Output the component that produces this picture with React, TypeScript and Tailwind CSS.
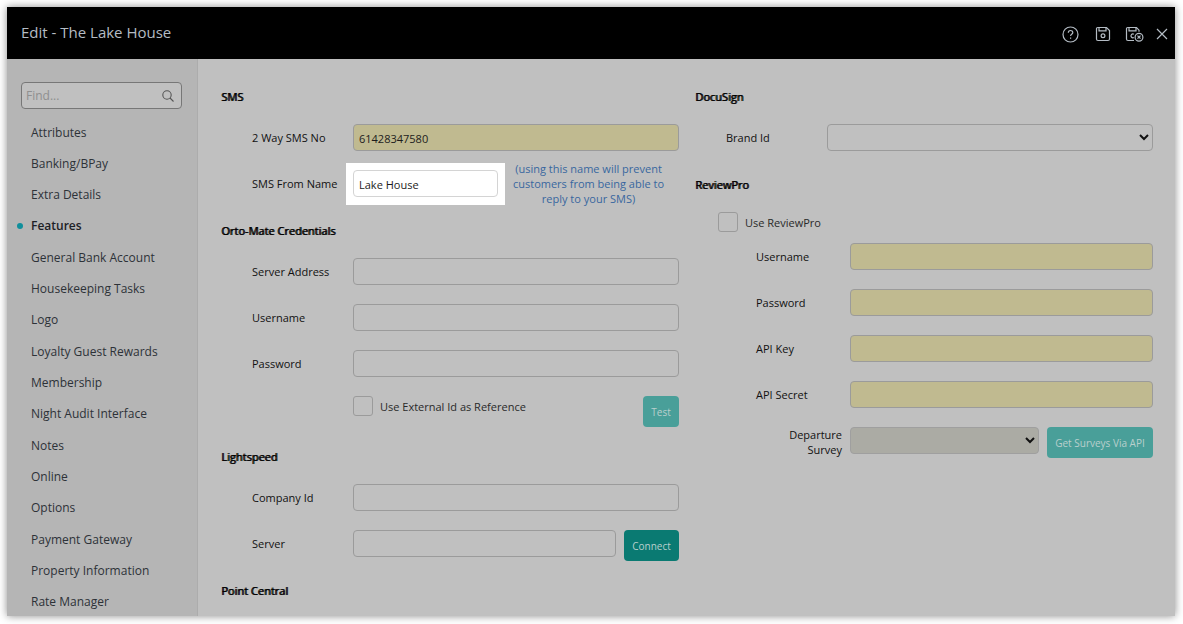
import type { ReactNode } from "react";

const menuItems = [
  "Attributes",
  "Banking/BPay",
  "Extra Details",
  "Features",
  "General Bank Account",
  "Housekeeping Tasks",
  "Logo",
  "Loyalty Guest Rewards",
  "Membership",
  "Night Audit Interface",
  "Notes",
  "Online",
  "Options",
  "Payment Gateway",
  "Property Information",
  "Rate Manager",
];

const inputClass = "h-[27px] w-full min-w-0 rounded border px-[5px] pt-0.5 text-[11px] text-[#1c1c1c] outline-none";
const buttonClass = "h-[31px] shrink-0 rounded pt-0.5 text-[10px]";

export default function App() {
  return (
    <div className="flex min-h-screen bg-white pt-[7px] pr-2 pb-2 pl-[7px] font-['Open_Sans','Noto_Sans',sans-serif] text-[11px] leading-[15px] text-[#111]">
      <div className="flex flex-1 flex-col bg-[#c0c0c0] shadow-[0_0_8px_rgba(0,0,0,0.45)]">
        <header className="flex h-[52px] items-center justify-between bg-black pr-[7px] pl-[14px] text-[#b4bcc4]">
          <h1 className="pb-0.5 text-[15px]">Edit - The Lake House</h1>
          <div className="flex items-center gap-4 pt-0.5">
            <button type="button" aria-label="Help"><HelpIcon /></button>
            <div className="flex items-center gap-[14px]">
              <button type="button" aria-label="Save"><SaveIcon /></button>
              <div className="flex items-center gap-3">
                <button type="button" aria-label="Save and close"><SaveExitIcon /></button>
                <button type="button" aria-label="Close"><CloseIcon /></button>
              </div>
            </div>
          </div>
        </header>

        <div className="flex flex-1">
          <Sidebar />
          <main className="grid flex-1 grid-cols-2 items-start gap-4 pt-[30px] pr-[22px] pb-4 pl-[23px]">
            <div className="flex flex-col gap-[22px]">
              <Section title="SMS">
                <Field id="sms-no" label="2 Way SMS No" value="61428347580" required />
                <div className="flex h-[31px] items-start pl-[31px]">
                  <FieldLabel id="sms-from">SMS From Name</FieldLabel>
                  <div className="-m-[7px] w-[159px] shrink-0 bg-white p-[7px] pb-2">
                    <input id="sms-from" defaultValue="Lake House" className={`${inputClass} border-[#d4d4d4] bg-white`} />
                  </div>
                  <p className="-mt-[9px] flex-1 text-center whitespace-nowrap text-[#38679f]">
                    (using this name will prevent<br />customers from being able to<br />reply to your SMS)
                  </p>
                </div>
              </Section>

              <Section title="Orto-Mate Credentials">
                <Field id="orto-server" label="Server Address" />
                <Field id="orto-user" label="Username" />
                <Field id="orto-password" label="Password" type="password" />
                <div className="flex items-start justify-between pl-[132px]">
                  <Checkbox id="external-id" label="Use External Id as Reference" />
                  <button type="button" className={`${buttonClass} w-9 bg-[#499f99] text-[#b9cfcd]`}>Test</button>
                </div>
              </Section>

              <Section title="Lightspeed">
                <Field id="company-id" label="Company Id" />
                <Field id="server" label="Server">
                  <button type="button" className={`${buttonClass} ml-2 w-[55px] bg-[#0a7a72] text-[#b9cfcd]`}>Connect</button>
                </Field>
              </Section>

              <Section title="Point Central" />
            </div>

            <div className="flex flex-col gap-[26px]">
              <Section title="DocuSign">
                <div className="flex items-start pl-[31px]">
                  <FieldLabel id="brand-id">Brand Id</FieldLabel>
                  <select id="brand-id" className="h-[27px] min-w-0 flex-1 rounded border border-[#9b9b9b] bg-[#c0c0c0]" />
                </div>
              </Section>

              <Section title="ReviewPro">
                <div className="pl-[23px]">
                  <Checkbox id="use-reviewpro" label="Use ReviewPro" />
                </div>
                <div className="-mt-2 flex flex-col gap-[19px] pl-[61px]">
                  <ReviewField id="rp-user" label="Username" />
                  <ReviewField id="rp-password" label="Password" type="password" />
                  <ReviewField id="rp-key" label="API Key" />
                  <ReviewField id="rp-secret" label="API Secret" />
                  <div className="flex items-start">
                    <label htmlFor="survey" className="w-[94px] shrink-0 pr-2 text-right">Departure<br />Survey</label>
                    <select id="survey" className="h-[27px] min-w-0 flex-1 rounded border border-[#9f9f9f] bg-[#ababa4]" />
                    <button type="button" className={`${buttonClass} ml-2 w-[106px] bg-[#499f99] text-[#b9cfcd]`}>Get Surveys Via API</button>
                  </div>
                </div>
              </Section>
            </div>
          </main>
        </div>
      </div>
    </div>
  );
}

function Sidebar() {
  return (
    <aside className="flex w-[191px] shrink-0 flex-col border-r border-[#acacac] bg-[#b5b5b5] pt-[23px] text-xs text-[#2d3238]">
      <div className="mr-[15px] ml-[14px] flex h-[27px] items-center rounded border border-[#777] bg-[#c0c0c0] pr-[7px] pl-1">
        <input aria-label="Find" placeholder="Find..." className="min-w-0 flex-1 bg-transparent outline-none placeholder:text-[#8f8f8f]" />
        <SearchIcon />
      </div>
      <nav className="mt-[9px] flex flex-1">
        <ul className="flex flex-1 flex-col justify-between">
          {menuItems.map((item) => (
            <li key={item} className="flex h-7 items-center pt-px pl-[10px]">
              <span className={`mr-2 size-1.5 rounded-full ${item === "Features" ? "bg-[#0f8f9c]" : ""}`} />
              <a href="#" className={item === "Features" ? "font-semibold text-[#1d2126]" : ""}>{item}</a>
            </li>
          ))}
        </ul>
      </nav>
    </aside>
  );
}

function Section({ title, children }: { title: string; children?: ReactNode }) {
  return (
    <section className="flex flex-col gap-[19px]">
      <h2 className="h-4 text-black [text-shadow:1px_0_0_#000]">{title}</h2>
      {children}
    </section>
  );
}

function FieldLabel({ id, children }: { id: string; children: ReactNode }) {
  return <label htmlFor={id} className="w-[101px] shrink-0 pt-1.5">{children}</label>;
}

type FieldProps = { id: string; label: string; value?: string; type?: string; required?: boolean; children?: ReactNode };

function Field({ id, label, value, type = "text", required, children }: FieldProps) {
  return (
    <div className="flex items-start pl-[31px]">
      <FieldLabel id={id}>{label}</FieldLabel>
      <input id={id} type={type} defaultValue={value} className={`${inputClass} flex-1 border-[#9b9b9b] ${required ? "bg-[#c0ba90]" : ""}`} />
      {children}
    </div>
  );
}

function ReviewField({ id, label, type = "text" }: { id: string; label: string; type?: string }) {
  return (
    <div className="flex items-start">
      <label htmlFor={id} className="w-[94px] shrink-0 pt-1.5">{label}</label>
      <input id={id} type={type} className={`${inputClass} flex-1 border-[#9b9b9b] bg-[#c0ba90]`} />
    </div>
  );
}

function Checkbox({ id, label }: { id: string; label: string }) {
  return (
    <div className="flex items-center gap-[7px]">
      <input id={id} type="checkbox" className="size-5 appearance-none rounded-[3px] border border-[#9b9b9b] checked:bg-[#499f99]" />
      <label htmlFor={id} className="text-[#2a2a2a]">{label}</label>
    </div>
  );
}

function SearchIcon() {
  return (
    <svg width="12" height="12" viewBox="0 0 12 12" fill="none" stroke="#555" strokeWidth="1.1">
      <circle cx="5" cy="5" r="4.2" />
      <path d="M8 8l3.5 3.5" />
    </svg>
  );
}

function HelpIcon() {
  return (
    <svg width="17" height="17" viewBox="0 0 17 17" fill="none" stroke="currentColor" strokeWidth="1.2" className="block">
      <circle cx="8.5" cy="8.5" r="7.5" />
      <path d="M6.3 6.8c0-3 4.5-3 4.5-.2 0 1.7-2.2 1.7-2.2 3.3" />
      <path d="M8.6 11.4v1.3" />
    </svg>
  );
}

function SaveIcon() {
  return (
    <svg width="16" height="16" viewBox="0 0 16 16" fill="none" stroke="currentColor" strokeWidth="1.2" className="block">
      <path d="M2.8 1.5h8.7l3 3V13a1.5 1.5 0 0 1-1.5 1.5H3A1.5 1.5 0 0 1 1.500 13V2.800a1.300 1.300 0 0 1 1.300-1.300z" />
      <path d="M4 1.5v3.300h7V1.500" />
      <circle cx="8" cy="9.7" r="1.9" />
    </svg>
  );
}

function SaveExitIcon() {
  return (
    <svg width="19" height="16" viewBox="0 0 19 16" fill="none" stroke="currentColor" strokeWidth="1.2" className="block">
      <path d="M9 14.500H3A1.500 1.500 0 0 1 1.500 13V2.800a1.300 1.300 0 0 1 1.300-1.300h8.700L14 4.200v1.600" />
      <path d="M4 1.5v3.300h7V1.500" />
      <path d="M8.900 8.200a1.900 1.900 0 1 0 0 3.200" />
      <circle cx="14" cy="11.200" r="3.9" />
      <path d="M12.500 9.700l3 3M15.500 9.700l-3 3" />
    </svg>
  );
}

function CloseIcon() {
  return (
    <svg width="12" height="12" viewBox="0 0 12 12" fill="none" stroke="currentColor" strokeWidth="1.2" className="block">
      <path d="M1 1l10 10M11 1L1 11" />
    </svg>
  );
}
